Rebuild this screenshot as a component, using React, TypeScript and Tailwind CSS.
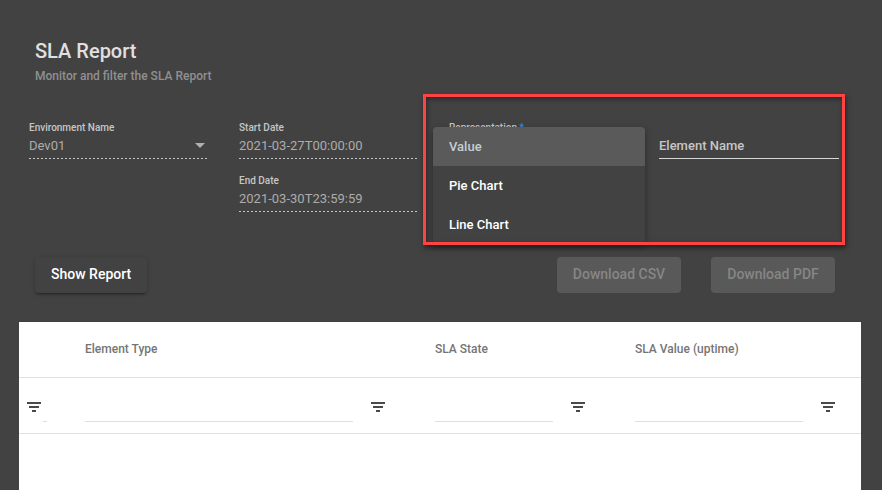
import type { ReactNode } from "react";

const dotted =
  "bg-[linear-gradient(to_right,#c6c6c6_0%,#c6c6c6_50%,transparent_50%)] bg-size-[4px_100%]";

function Field({ id, label, line, children }: { id: string; label: string; line: string; children: ReactNode }) {
  return (
    <div>
      <label htmlFor={id} className="block text-[10px] leading-4 text-[#c6c6c6]">
        {label}
      </label>
      <div className="h-5">{children}</div>
      <div className={`mt-[2px] h-px ${line}`} />
    </div>
  );
}

function DateField({ id, label, value }: { id: string; label: string; value: string }) {
  return (
    <Field id={id} label={label} line={dotted}>
      <input
        id={id}
        type="text"
        disabled
        defaultValue={value}
        className="block h-5 w-full text-[13px] leading-5 font-normal text-[#acacac]"
      />
    </Field>
  );
}

const representations = ["Value", "Pie Chart", "Line Chart"];

function RepresentationField() {
  return (
    <div className="relative">
      <label htmlFor="representation" className="block text-[10px] leading-4 text-[#c6c6c6]">
        Representation <span className="text-[#2196f3]">*</span>
      </label>
      <select id="representation" className="block h-5 w-full appearance-none text-[13px] text-transparent">
        {representations.map((name) => (
          <option key={name}>{name}</option>
        ))}
      </select>
      <div
        role="listbox"
        aria-label="Representation"
        className="absolute -inset-x-4 top-[7px] h-[116px] overflow-hidden rounded-t bg-[#424242] shadow-[0_2px_4px_-1px_rgba(0,0,0,0.2),0_4px_5px_rgba(0,0,0,0.14),0_1px_10px_rgba(0,0,0,0.12)]"
      >
        {representations.map((name, index) => (
          <button
            key={name}
            type="button"
            role="option"
            aria-selected={index === 0}
            className={`block h-[39px] w-full px-4 text-left text-[13px] ${
              index === 0 ? "bg-[#5a5a5a] text-[#c5cfd3]" : "text-white"
            }`}
          >
            {name}
          </button>
        ))}
      </div>
    </div>
  );
}

function FilterButton({ label }: { label: string }) {
  return (
    <button type="button" aria-label={label} className="shrink-0">
      <svg width="14" height="10" viewBox="0 0 14 10" fill="#4a4a4a" shapeRendering="crispEdges">
        <path d="M0 0h14v2H0zM2 4h10v2H2zM5 8h4v2H5z" />
      </svg>
    </button>
  );
}

function FilterCell({ name, last }: { name: string; last?: boolean }) {
  return (
    <td className={`pt-1 pb-0 pl-4 ${last ? "pr-[26px]" : "pr-[34px]"}`}>
      <div className="flex items-center gap-[18px]">
        <input
          type="text"
          aria-label={`Filter ${name}`}
          className="h-[30px] min-w-0 flex-1 border-b border-[#dedede] text-xs text-[#424242] outline-none"
        />
        <FilterButton label={`Filter by ${name}`} />
      </div>
    </td>
  );
}

const columns = ["Element Type", "SLA State", "SLA Value (uptime)"];

export default function App() {
  return (
    <main className="flex min-h-screen flex-col bg-[#424242] font-['Roboto','Liberation_Sans',sans-serif] font-medium">
      <header className="px-[35px] pt-[39px]">
        <h1 className="text-xl leading-6 text-[#e0e0e0]">SLA Report</h1>
        <p className="mt-[3px] text-xs leading-5 text-[#909090]">Monitor and filter the SLA Report</p>
      </header>

      <form className="relative mt-[34px] grid grid-cols-4 gap-[30px] pr-[43px] pl-[29px]">
        <Field id="environment" label="Environment Name" line={dotted}>
          <div className="relative">
            <select
              id="environment"
              disabled
              className="block h-5 w-full appearance-none text-[13px] leading-5 font-normal text-[#acacac] opacity-100"
            >
              <option>Dev01</option>
            </select>
            <svg className="absolute top-[7px] right-1" width="10" height="5" viewBox="0 0 10 5" fill="#b0b0b0">
              <path d="M0 0h10L5 5z" />
            </svg>
          </div>
        </Field>

        <div className="flex flex-col gap-[14px]">
          <DateField id="start-date" label="Start Date" value="2021-03-27T00:00:00" />
          <DateField id="end-date" label="End Date" value="2021-03-30T23:59:59" />
        </div>

        <RepresentationField />

        <div className="pt-[15px]">
          <input
            type="text"
            aria-label="Element Name"
            placeholder="Element Name"
            className="block h-6 w-full border-b border-[#d8d8d8] pb-[3px] text-[13px] leading-5 outline-none placeholder:text-[#c6c6c6]"
          />
        </div>

        <div className="pointer-events-none absolute -top-[26px] right-[37px] left-[calc(50%-18px)] h-[151px] border-3 border-[#ff4343] shadow-[1px_3px_5px_rgba(0,0,0,0.5),inset_1px_2px_5px_rgba(0,0,0,0.4)]" />
      </form>

      <div className="mt-[45px] flex items-center gap-[30px] pr-[47px] pl-[35px] text-sm">
        <button
          type="button"
          className="mr-auto h-9 rounded px-4 pb-[2px] text-white shadow-[0_3px_1px_-2px_rgba(0,0,0,0.2),0_2px_2px_rgba(0,0,0,0.14),0_1px_5px_rgba(0,0,0,0.12)]"
        >
          Show Report
        </button>
        <button type="button" disabled className="h-9 w-[124px] rounded bg-[#595959] pb-[2px] text-[#868686]">
          Download CSV
        </button>
        <button type="button" disabled className="h-9 w-[124px] rounded bg-[#595959] pb-[2px] text-[#868686]">
          Download PDF
        </button>
      </div>

      <section className="mt-[29px] mr-[21px] ml-[19px] flex-1 bg-white">
        <table className="w-full table-fixed border-collapse">
          <colgroup>
            <col className="w-[50px]" />
            <col className="w-[350px]" />
            <col className="w-[200px]" />
            <col />
          </colgroup>
          <thead>
            <tr className="h-[55px] border-b border-[#e0e0e0]">
              <td />
              {columns.map((name) => (
                <th key={name} scope="col" className="px-4 text-left text-xs font-medium text-[#757575]">
                  {name}
                </th>
              ))}
            </tr>
          </thead>
          <tbody>
            <tr className="h-14 border-b border-[#e0e0e0]">
              <td className="pt-1 pl-2">
                <div className="flex items-center gap-[2px]">
                  <FilterButton label="Filter rows" />
                  <input
                    type="text"
                    aria-label="Filter value"
                    className="h-[30px] w-1 border-b border-[#dedede] outline-none"
                  />
                </div>
              </td>
              {columns.map((name, index) => (
                <FilterCell key={name} name={name} last={index === columns.length - 1} />
              ))}
            </tr>
          </tbody>
        </table>
      </section>
    </main>
  );
}
